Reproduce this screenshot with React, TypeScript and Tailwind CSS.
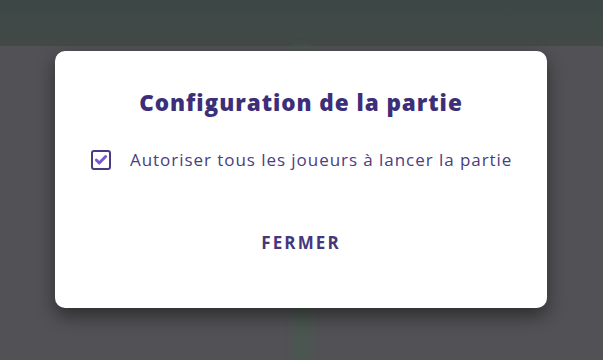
import { Check } from "lucide-react";

export default function App() {
  return (
    <div
      className="relative h-[360px] w-[603px] overflow-hidden bg-[#525256]"
      style={{ fontFamily: '"Open Sans", "Noto Sans", sans-serif' }}
    >
      <div className="h-[46px] bg-gradient-to-b from-[#3c4845] to-[#434a48]" />
      <div className="mx-auto h-full w-[20px] bg-[#4b5650] blur-[3px]" />

      <div className="absolute left-[55px] top-[51px] flex h-[257px] w-[492px] flex-col items-center rounded-[10px] bg-white shadow-[0_8px_18px_rgba(0,0,0,0.45)]">
        <h2 className="mt-[36px] text-[22.5px] font-extrabold leading-[32px] tracking-[0.95px] text-[#3d2e78]">
          Configuration de la partie
        </h2>

        <label className="mt-[29px] flex w-full items-center gap-[19px] pl-[36px]">
          <span className="flex h-[20px] w-[20px] items-center justify-center rounded-[3px] border-2 border-[#4a3b85]">
            <Check className="h-[14px] w-[14px] text-[#7758d4]" strokeWidth={5} />
          </span>
          <span className="text-[17px] leading-[24px] tracking-[0.95px] text-[#4a3d82]">
            Autoriser tous les joueurs à lancer la partie
          </span>
        </label>

        <button className="mt-[58px] text-[17px] font-bold tracking-[2.1px] text-[#45377e]">
          FERMER
        </button>
      </div>
    </div>
  );
}
